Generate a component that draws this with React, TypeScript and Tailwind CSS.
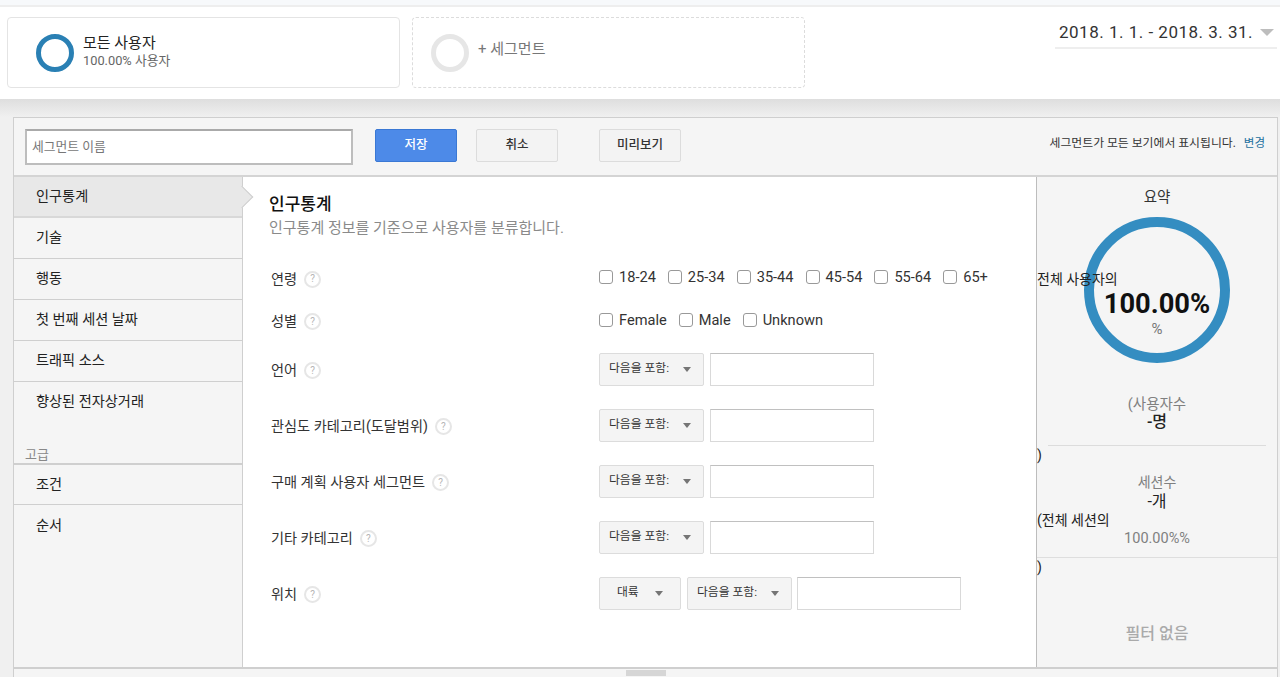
const font = "font-['Roboto','Noto_Sans_CJK_KR',sans-serif]";

const navTop = ["인구통계", "기술", "행동", "첫 번째 세션 날짜", "트래픽 소스", "향상된 전자상거래"];
const navBottom = ["조건", "순서"];
const ages = ["18-24", "25-34", "35-44", "45-54", "55-64", "65+"];
const genders = ["Female", "Male", "Unknown"];

function Ring({ size, stroke, color }: { size: number; stroke: number; color: string }) {
  const r = (size - stroke) / 2;
  return (
    <svg width={size} height={size} className="shrink-0">
      <circle cx={size / 2} cy={size / 2} r={r} fill="none" stroke={color} strokeWidth={stroke} />
    </svg>
  );
}

function Help() {
  return (
    <span className="ml-[7px] flex h-[17px] w-[17px] items-center justify-center rounded-full border-2 border-[#e6e6e6] bg-white text-[10px] leading-none text-[#b5b5b5]">
      ?
    </span>
  );
}

function Check({ label, gap }: { label: string; gap: string }) {
  return (
    <label className={`flex items-center gap-[6px] ${gap}`}>
      <span className="h-[14px] w-[14px] rounded-[3px] border border-[#999] bg-white" />
      <span className="text-[14.6px] leading-none text-[#333]">{label}</span>
    </label>
  );
}

function Select({ label, width, inset = "pl-[9px] gap-[14px]" }: { label: string; width: string; inset?: string }) {
  return (
    <div className={`flex h-[33px] items-center rounded-[2px] border border-[#dcdcdc] bg-[#f4f4f4] text-[11.8px] text-[#333] ${inset} ${width}`}>
      <span className="-mt-[2px]">{label}</span>
      <span className="h-0 w-0 border-x-[4.5px] border-t-[5px] border-x-transparent border-t-[#757575]" />
    </div>
  );
}

function TextBox({ width }: { width: string }) {
  return <div className={`h-[33px] border border-[#d9d9d9] border-t-[#c0c0c0] bg-white ${width}`} />;
}

function Row({ label, height, children }: { label: string; height: string; children: React.ReactNode }) {
  return (
    <div className={`flex items-center ${height}`}>
      <div className="flex w-[328px] items-center pt-[2px] text-[14.2px] text-[#333]">
        {label}
        <Help />
      </div>
      <div className="flex items-center">{children}</div>
    </div>
  );
}

function Include() {
  return (
    <div className="-mt-[1px] flex items-center">
      <Select label="다음을 포함:" width="w-[105px]" />
      <div className="w-[6px]" />
      <TextBox width="w-[164px]" />
    </div>
  );
}

function Button({ label, primary }: { label: string; primary?: boolean }) {
  return (
    <div
      className={
        primary
          ? "flex h-[33px] w-[82px] items-center justify-center rounded-[2px] border border-[#3a78d4] bg-[#4d8ae8] text-[12.5px] font-medium text-white"
          : "flex h-[33px] w-[82px] items-center justify-center rounded-[2px] border border-[#dcdcdc] bg-[#f3f3f3] text-[12.5px] font-medium text-[#333]"
      }
    >
      {label}
    </div>
  );
}

export default function App() {
  return (
    <div className={`h-[677px] w-full overflow-hidden bg-[#efefef] ${font}`}>
      <div className="h-[7px] border-b-2 border-[#eeeeee] bg-[#f7f9fb]" />

      {/* Segment header */}
      <header className="flex h-[92px] bg-white pl-[7px] pt-[10px]">
        <div className="flex h-[71px] w-[393px] items-center rounded-[4px] border border-[#e4e4e4] pl-[28px]">
          <Ring size={38} stroke={5} color="#2a80b4" />
          <div className="ml-[9px] -mt-[3px]">
            <div className="text-[15px] leading-[19px] text-[#222]">모든 사용자</div>
            <div className="text-[12.8px] leading-[16px] text-[#666]">100.00% 사용자</div>
          </div>
        </div>
        <div className="ml-[12px] flex h-[71px] w-[393px] items-center rounded-[4px] border border-dashed border-[#dcdcdc] pl-[18px]">
          <Ring size={38} stroke={5} color="#e6e6e6" />
          <span className="ml-[9px] -mt-[7px] text-[15px] text-[#777]">+ 세그먼트</span>
        </div>
        <div className="ml-[250px] flex h-[32px] w-[222px] items-center justify-between border-b-2 border-[#eeeeee] pl-[4px] pr-[3px]">
          <span className="text-[17px] leading-none tracking-[0.5px] text-[#333]">2018. 1. 1. - 2018. 3. 31.</span>
          <span className="h-0 w-0 border-x-[7px] border-t-[7px] border-x-transparent border-t-[#bdbdbd]" />
        </div>
      </header>

      {/* Panel */}
      <div className="bg-gradient-to-b from-[#dedede] to-[#f0f0f0] to-[18px] pl-[13px] pr-[2px] pt-[18px]">
        <div className="flex flex-col border border-[#cfcfcf] bg-[#f5f5f5]">
          <div className="flex h-[59px] shrink-0 items-start border-b-2 border-[#d4d4d4] pl-[11px] pr-[12px] pt-[11px]">
            <div className="flex h-[36px] w-[328px] items-center border-2 border-[#bdbdbd] border-t-[#aaa] bg-white pl-[5px] text-[12.8px] text-[#777]">
              세그먼트 이름
            </div>
            <div className="ml-[22px]">
              <Button label="저장" primary />
            </div>
            <div className="ml-[19px]">
              <Button label="취소" />
            </div>
            <div className="ml-[41px]">
              <Button label="미리보기" />
            </div>
            <div className="ml-auto flex h-[30px] items-center text-[11.85px] text-[#333]">
              세그먼트가 모든 보기에서 표시됩니다.
              <span className="ml-[8px] text-[11.5px] text-[#22709e]">변경</span>
            </div>
          </div>

          <div className="flex h-[490px] shrink-0">
            {/* Sidebar */}
            <nav className="w-[229px] shrink-0 border-r border-[#cfcfcf]">
              {navTop.map((item, i) => (
                <div
                  key={item}
                  className={
                    i === 0
                      ? "relative flex h-[41px] items-start border-b-2 border-[#d8d8d8] bg-[#e8e8e8] pl-[22px] pt-[9px] text-[14.2px] text-[#222]"
                      : i === navTop.length - 1
                        ? "flex h-[41px] items-start pl-[22px] pt-[9px] text-[14.2px] text-[#222]"
                        : "flex h-[41px] items-start border-b border-[#cfcfcf] pl-[22px] pt-[9px] text-[14.2px] text-[#222]"
                  }
                >
                  {item}
                  {i === 0 && (
                    <span className="absolute -right-[8px] top-[12px] z-10 h-[16px] w-[16px] rotate-45 border-r border-t border-[#cfcfcf] bg-[#e8e8e8]" />
                  )}
                </div>
              ))}
              <div className="flex h-[40px] items-end pl-[11px] text-[13px] leading-[16px] text-[#888]">고급</div>
              <div className="border-t-2 border-[#cfcfcf]">
                {navBottom.map((item) => (
                  <div key={item} className="flex h-[40px] items-start border-b border-[#cfcfcf] pl-[22px] pt-[9px] text-[14.2px] text-[#222] last:border-b-0 last:pt-[10px]">
                    {item}
                  </div>
                ))}
              </div>
            </nav>

            {/* Form */}
            <main className="w-[793px] shrink-0 bg-white pl-[26px]">
              <h1 className="pt-[16px] text-[17px] font-medium leading-[22px] text-[#111]">인구통계</h1>
              <p className="mt-[4px] text-[15px] leading-[18px] text-[#8a8a8a]">인구통계 정보를 기준으로 사용자를 분류합니다.</p>
              <div className="mt-[20px] pl-[2px]">
                <Row label="연령" height="h-[43px]">
                  {ages.map((a, i) => (
                    <Check key={a} label={a} gap={i === 0 ? "-mt-[3px]" : "-mt-[3px] ml-[12px]"} />
                  ))}
                </Row>
                <Row label="성별" height="h-[42px]">
                  {genders.map((g, i) => (
                    <Check key={g} label={g} gap={i === 0 ? "-mt-[2px]" : "-mt-[2px] ml-[12px]"} />
                  ))}
                </Row>
                <Row label="언어" height="h-[56px]">
                  <Include />
                </Row>
                <Row label="관심도 카테고리(도달범위)" height="h-[56px]">
                  <Include />
                </Row>
                <Row label="구매 계획 사용자 세그먼트" height="h-[56px]">
                  <Include />
                </Row>
                <Row label="기타 카테고리" height="h-[56px]">
                  <Include />
                </Row>
                <Row label="위치" height="h-[56px]">
                  <div className="-mt-[1px] flex items-center">
                    <Select label="대륙" width="w-[82px]" inset="pl-[17px] gap-[16px]" />
                    <div className="w-[6px]" />
                    <Select label="다음을 포함:" width="w-[105px]" />
                    <div className="w-[5px]" />
                    <TextBox width="w-[164px]" />
                  </div>
                </Row>
              </div>
            </main>

            {/* Summary */}
            <aside className="relative min-w-0 flex-1 border-l border-[#bdbdbd] text-center">
              <div className="flex h-[40px] items-center justify-center pt-[2px] text-[14.5px] text-[#333]">요약</div>
              <div className="relative mx-auto h-[146px] w-[146px]">
                <Ring size={146} stroke={10} color="#348dc1" />
              </div>
              <div className="absolute left-0 top-[93px] text-[14px] leading-[18px] text-[#222]">전체 사용자의</div>
              <div className="absolute inset-x-0 top-[109px] text-[27.3px] font-bold leading-[36px] text-[#111]">100.00%</div>
              <div className="absolute inset-x-0 top-[143px] text-[15px] leading-[18px] text-[#777]">%</div>
              <div className="mt-[33px] text-[14.5px] leading-[18px] text-[#808080]">(사용자수</div>
              <div className="text-[16px] font-medium leading-[16px] text-[#222]">-명</div>
              <div className="mx-[11px] mt-[15px] h-[1px] bg-[#dcdcdc]" />
              <div className="h-[27px] text-left text-[14px] leading-[18px] text-[#222]">)</div>
              <div className="text-[14px] leading-[18px] text-[#808080]">세션수</div>
              <div className="text-[16px] leading-[22px] text-[#222]">-개</div>
              <div className="-mt-[2px] text-left text-[14px] leading-[18px] text-[#222]">(전체 세션의</div>
              <div className="mt-[1px] text-[14.5px] leading-[17px] text-[#808080]">100.00%%</div>
              <div className="mt-[10px] h-[1px] bg-[#dedede]" />
              <div className="text-left text-[14px] leading-[18px] text-[#222]">)</div>
              <div className="mt-[46px] text-[16px] font-medium leading-[24px] text-[#aaaaaa]">필터 없음</div>
            </aside>
          </div>

          {/* Drag handle */}
          <div className="flex h-[12px] shrink-0 justify-center border-t-2 border-[#cfcfcf] pt-[1px]">
            <div className="h-[6px] w-[40px] bg-[#d6d6d6]" />
          </div>
        </div>
      </div>
    </div>
  );
}
